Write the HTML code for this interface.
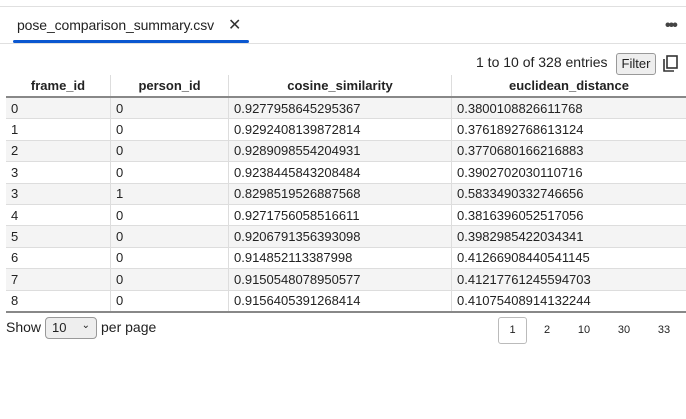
<!DOCTYPE html>
<html><head><style>
body{margin:0;width:686px;height:419px;background:#fff;font-family:"Liberation Sans",Arial,sans-serif;position:relative;overflow:hidden;color:#212121}
.topline{position:absolute;left:0;right:0;top:6px;border-top:1px solid #e0e0e0}
.tab{position:absolute;left:17px;top:17px;font-size:14px;color:#222;letter-spacing:-0.1px}
.x{position:absolute;left:228px;top:15px;font-size:16px;color:#333}
.ul{position:absolute;left:13px;top:40px;width:236px;height:3px;background:#0b57d0;border-radius:2px}
.hl{position:absolute;left:0;right:0;top:43px;border-top:1px solid #e0e0e0}
.dots{position:absolute;left:665px;top:17px;font-size:16px;font-weight:bold;letter-spacing:-2px;color:#444}
.ent{position:absolute;left:476px;top:54px;font-size:14px;color:#222}
.filt{position:absolute;left:616px;top:53px;width:38px;height:20px;border:1px solid #999;border-radius:3px;background:#eee;font-size:13px;text-align:center;line-height:20px}
.copy{position:absolute;left:662px;top:55px}
table{position:absolute;left:6px;top:75px;border-collapse:collapse;font-size:13px}
th{height:21px;font-weight:bold;border-left:1px solid #ddd;border-bottom:2px solid #888;padding:0;text-align:center;color:#222}
td{height:20.4px;border-left:1px solid #ddd;border-bottom:1px solid #ddd;padding:0 0 0 5px;color:#222}
th:first-child,td:first-child{border-left:none}
tr:nth-child(even) td{background:#f4f4f4}
tr:last-child td{border-bottom:2px solid #888}
.show{position:absolute;left:6px;top:319px;font-size:14px}
.sel{position:absolute;left:45px;top:317px;width:44px;height:20px;border:1px solid #999;border-radius:4px;background:#eee;font-size:13px;line-height:20px;padding-left:6px}
.sel span{position:absolute;right:6px;top:-2px;font-size:10px}
.pp{position:absolute;left:101px;top:319px;font-size:14px}
.pg{position:absolute;top:317px;font-size:11px;color:#222;text-align:center;width:28px;height:26px;line-height:26px}
</style></head><body>
<div class="topline"></div>
<div class="tab">pose_comparison_summary.csv</div>
<div class="x">✕</div>
<div class="ul"></div>
<div class="hl"></div>
<div class="dots">•••</div>
<div class="ent">1 to 10 of 328 entries</div>
<div class="filt">Filter</div>
<svg class="copy" width="16" height="18" viewBox="0 0 16 18"><rect x="5" y="1" width="10" height="12" fill="none" stroke="#333" stroke-width="1.6"/><path d="M2 4v12h10" fill="none" stroke="#333" stroke-width="1.6"/></svg>
<table>
<tr><th style="width:104px">frame_id</th><th style="width:117px">person_id</th><th style="width:222px">cosine_similarity</th><th style="width:234px">euclidean_distance</th></tr>
<tr><td>0</td><td>0</td><td>0.9277958645295367</td><td>0.3800108826611768</td></tr>
<tr><td>1</td><td>0</td><td>0.9292408139872814</td><td>0.3761892768613124</td></tr>
<tr><td>2</td><td>0</td><td>0.9289098554204931</td><td>0.3770680166216883</td></tr>
<tr><td>3</td><td>0</td><td>0.9238445843208484</td><td>0.3902702030110716</td></tr>
<tr><td>3</td><td>1</td><td>0.8298519526887568</td><td>0.5833490332746656</td></tr>
<tr><td>4</td><td>0</td><td>0.9271756058516611</td><td>0.3816396052517056</td></tr>
<tr><td>5</td><td>0</td><td>0.9206791356393098</td><td>0.3982985422034341</td></tr>
<tr><td>6</td><td>0</td><td>0.914852113387998</td><td>0.41266908440541145</td></tr>
<tr><td>7</td><td>0</td><td>0.9150548078950577</td><td>0.41217761245594703</td></tr>
<tr><td>8</td><td>0</td><td>0.9156405391268414</td><td>0.41075408914132244</td></tr>
</table>
<div class="show">Show</div>
<div class="sel">10<span>⌄</span></div>
<div class="pp">per page</div>
<div class="pg" style="left:498px;border:1px solid #bbb;border-radius:3px;width:27px;height:25px;line-height:25px">1</div>
<div class="pg" style="left:533px">2</div>
<div class="pg" style="left:570px">10</div>
<div class="pg" style="left:610px">30</div>
<div class="pg" style="left:650px">33</div>
</body></html>
